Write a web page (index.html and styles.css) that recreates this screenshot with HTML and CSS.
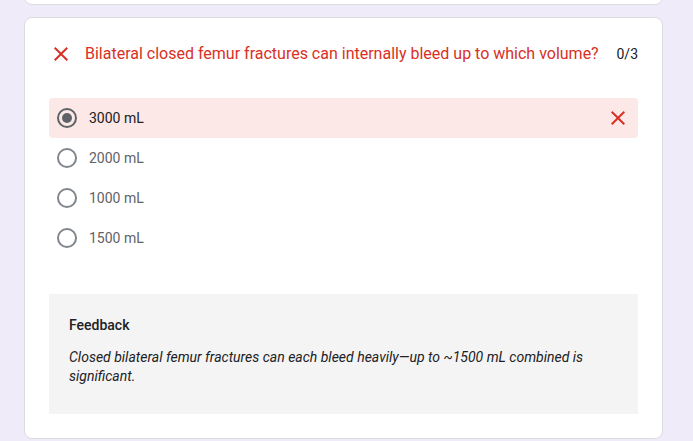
FILE: index.html
```html
<!DOCTYPE html>
<html>
<head>
<meta charset="utf-8">
<link rel="stylesheet" href="styles.css">
</head>
<body>
<div class="page">
  <div class="card card-prev"></div>
  <div class="card question">
    <div class="q-header">
      <svg class="icon icon-wrong" viewBox="0 0 24 24" width="24" height="24"><path d="M19 6.41L17.59 5 12 10.59 6.41 5 5 6.41 10.59 12 5 17.59 6.41 19 12 13.41 17.59 19 19 17.59 13.41 12z" fill="#d93025"/></svg>
      <div class="q-title">Bilateral closed femur fractures can internally bleed up to which volume?</div>
      <div class="q-score">0/3</div>
    </div>
    <div class="options">
      <div class="option option-wrong">
        <span class="radio radio-checked"><span class="dot"></span></span>
        <span class="opt-label opt-label-selected">3000 mL</span>
        <svg class="icon opt-mark" viewBox="0 0 24 24" width="24" height="24"><path d="M19 6.41L17.59 5 12 10.59 6.41 5 5 6.41 10.59 12 5 17.59 6.41 19 12 13.41 17.59 19 19 17.59 13.41 12z" fill="#d93025"/></svg>
      </div>
      <div class="option">
        <span class="radio"></span>
        <span class="opt-label">2000 mL</span>
      </div>
      <div class="option">
        <span class="radio"></span>
        <span class="opt-label">1000 mL</span>
      </div>
      <div class="option">
        <span class="radio"></span>
        <span class="opt-label">1500 mL</span>
      </div>
    </div>
    <div class="feedback">
      <div class="fb-title">Feedback</div>
      <p class="fb-text">Closed bilateral femur fractures can each bleed heavily—up to ~1500 mL combined is significant.</p>
    </div>
  </div>
</div>
</body>
</html>
```
FILE: styles.css
```css
html, body {
  margin: 0;
  padding: 0;
  background: #f0ebf8;
  font-family: Roboto, "Liberation Sans", Arial, sans-serif;
  color: #202124;
}
.page {
  width: 639px;
  margin-left: 24px;
  display: flex;
  flex-direction: column;
  gap: 12px;
}
.card {
  background: #fff;
  border: 1px solid #dadce0;
  border-radius: 8px;
  box-sizing: border-box;
}
.card-prev {
  height: 24px;
  margin-top: -19px;
}
.question {
  padding: 24px 24px 24px 24px;
}
.q-header {
  display: flex;
  align-items: center;
  height: 24px;
  margin-bottom: 32px;
}
.icon {
  flex: none;
  display: block;
}
.q-title {
  margin-left: 12px;
  flex: 1;
  font-size: 16px;
  line-height: 24px;
  color: #d93025;
  white-space: nowrap;
}
.q-score {
  font-size: 14px;
  line-height: 24px;
  color: #202124;
}
.options {
  display: flex;
  flex-direction: column;
}
.option {
  height: 40px;
  display: flex;
  align-items: center;
  padding: 0 8px;
  border-radius: 4px;
}
.option-wrong {
  background: #fce8e6;
}
.radio {
  width: 20px;
  height: 20px;
  box-sizing: border-box;
  border: 2px solid #80868b;
  border-radius: 50%;
  display: flex;
  align-items: center;
  justify-content: center;
  flex: none;
}
.radio-checked {
  border-color: #5f6368;
}
.dot {
  width: 10px;
  height: 10px;
  border-radius: 50%;
  background: #5f6368;
}
.opt-label {
  margin-left: 12px;
  font-size: 14px;
  color: #5f6368;
  flex: 1;
}
.opt-label-selected {
  color: #202124;
}
.feedback {
  margin-top: 36px;
  background: #f4f4f4;
  height: 120px;
  box-sizing: border-box;
  padding: 21px 20px;
}
.fb-title {
  font-size: 14px;
  font-weight: 500;
  line-height: 20px;
  color: #202124;
}
.fb-text {
  margin: 13px 0 0 0;
  font-size: 14px;
  font-style: italic;
  line-height: 19px;
  color: #202124;
}
```
